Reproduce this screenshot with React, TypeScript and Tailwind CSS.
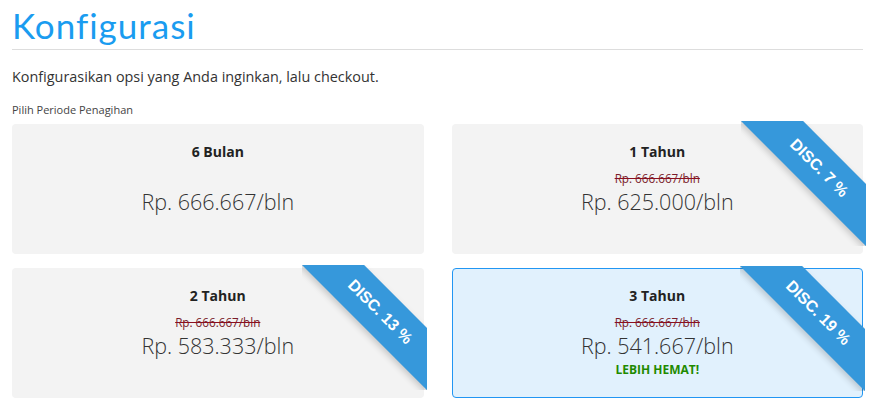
const plans = [
  { label: '6 Bulan', price: 'Rp. 666.667/bln', old: null, disc: null, active: false },
  { label: '1 Tahun', price: 'Rp. 625.000/bln', old: 'Rp. 666.667/bln', disc: 'DISC. 7 %', active: false },
  { label: '2 Tahun', price: 'Rp. 583.333/bln', old: 'Rp. 666.667/bln', disc: 'DISC. 13 %', active: false },
  { label: '3 Tahun', price: 'Rp. 541.667/bln', old: 'Rp. 666.667/bln', disc: 'DISC. 19 %', active: true },
];

function Ribbon({ text }: { text: string }) {
  return (
    <div className="absolute -top-[3px] -right-[3px] w-[125px] h-[125px] overflow-hidden pointer-events-none">
      <div className="absolute left-[-22px] top-[25px] w-[200px] h-[44px] rotate-45 bg-[#3698db] shadow-[0_3px_6px_rgba(0,0,0,0.18)] flex items-center justify-center text-white font-bold text-[16px] font-['Liberation_Sans',Arial,sans-serif]">
        {text}
      </div>
    </div>
  );
}

export default function App() {
  return (
    <div className="w-[880px] h-[419px] bg-white overflow-hidden px-3 font-['Open_Sans',sans-serif] text-[#333]">
      <h1 className="text-[35px] leading-[48px] tracking-[1px] text-[#1a9cf0] font-['Lato',sans-serif] font-normal pt-[1px]">Konfigurasi</h1>
      <div className="border-b border-[#dddddd] w-[851px]" />
      <p className="text-[14.4px] leading-[20px] mt-[17px] text-[#333]">Konfigurasikan opsi yang Anda inginkan, lalu checkout.</p>
      <p className="text-[11px] leading-[16px] mt-[15px] text-[#444]">Pilih Periode Penagihan</p>
      <div className="grid grid-cols-2 gap-x-[28px] gap-y-[14px] mt-[6px] w-[851px]">
        {plans.map((p) => (
          <div
            key={p.label}
            className={`relative h-[130px] rounded-[4px] text-center ${
              p.active ? 'bg-[#e1f1fd] border border-[#2196f3] pt-[17px]' : 'bg-[#f3f3f3] pt-[18px]'
            }`}
          >
            <div className="text-[14px] leading-[20px] font-bold text-[#222]">{p.label}</div>
            <div className={`h-[16px] text-[11.7px] leading-[16px] mt-[8px] text-[#7a1c2a] line-through decoration-[#8b0f1f] ${p.old ? '' : 'invisible'}`}>
              {p.old}
            </div>
            <div className="text-[21.5px] leading-[30px] font-light text-[#333] mt-[1px]">{p.price}</div>
            {p.active && (
              <div className="text-[12px] leading-[16px] font-bold text-[#1f8a00] mt-[1px]">LEBIH HEMAT!</div>
            )}
            {p.disc && <Ribbon text={p.disc} />}
          </div>
        ))}
      </div>
    </div>
  );
}
